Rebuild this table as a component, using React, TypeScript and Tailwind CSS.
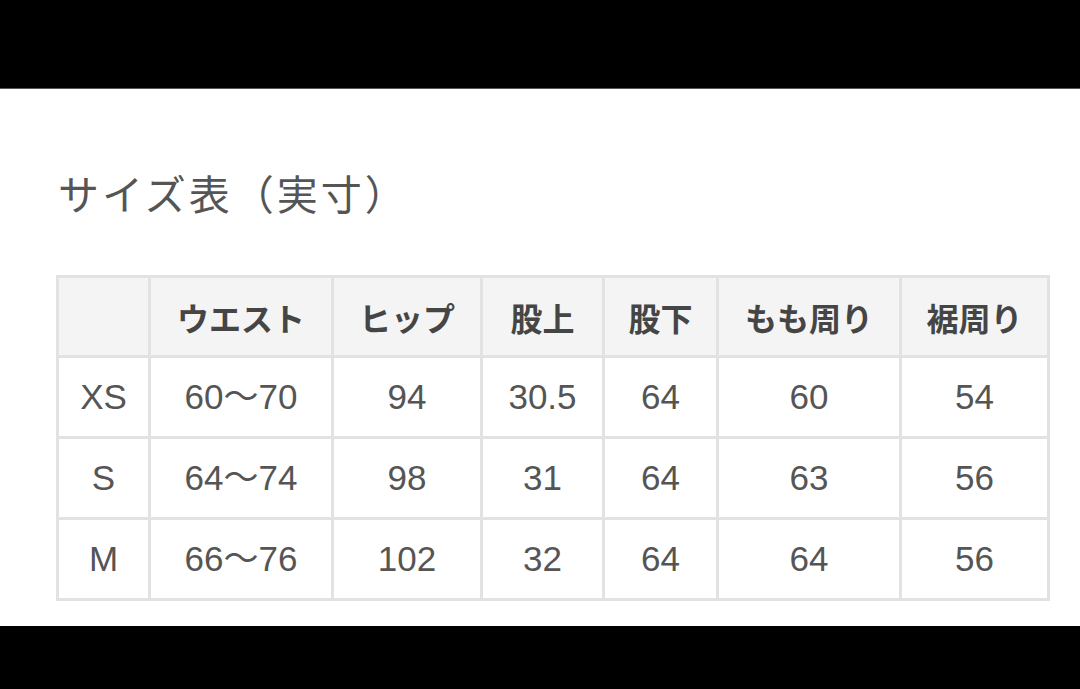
const headers = ["", "ウエスト", "ヒップ", "股上", "股下", "もも周り", "裾周り"];

const rows = [
  ["XS", "60〜70", "94", "30.5", "64", "60", "54"],
  ["S", "64〜74", "98", "31", "64", "63", "56"],
  ["M", "66〜76", "102", "32", "64", "64", "56"],
];

const widths = ["w-[92px]", "w-[183px]", "w-[149px]", "w-[122px]", "w-[114px]", "w-[183px]", "w-[148px]"];

export default function App() {
  return (
    <div className="flex h-[689px] w-[1080px] flex-col bg-black font-['Noto_Sans_CJK_JP',sans-serif]">
      <div className="h-[89px] shrink-0 border-b border-[#555]" />
      <div className="flex h-[537px] flex-col bg-white pl-[56px]">
        <h1 className="mt-[83px] pl-[2px] text-[41px] leading-none tracking-[3px] text-[#555]">
          サイズ表（実寸）
        </h1>
        <table className="mt-[62px] w-[992px] table-fixed border-collapse border-[3px] border-[#e2e2e2]">
          <colgroup>
            {widths.map((w, i) => (
              <col key={i} className={w} />
            ))}
          </colgroup>
          <thead>
            <tr className="h-[80px] bg-[#f4f4f4]">
              {headers.map((h, i) => (
                <th
                  key={i}
                  className="border-[3px] border-[#e2e2e2] text-center text-[32px] font-bold text-[#454545]"
                >
                  {h}
                </th>
              ))}
            </tr>
          </thead>
          <tbody>
            {rows.map((r) => (
              <tr key={r[0]} className="h-[81px]">
                {r.map((c, i) => (
                  <td
                    key={i}
                    className="border-[3px] border-[#e2e2e2] text-center font-['Liberation_Sans','Noto_Sans_CJK_JP',sans-serif] text-[35px] text-[#555]"
                  >
                    {c}
                  </td>
                ))}
              </tr>
            ))}
          </tbody>
        </table>
      </div>
    </div>
  );
}
